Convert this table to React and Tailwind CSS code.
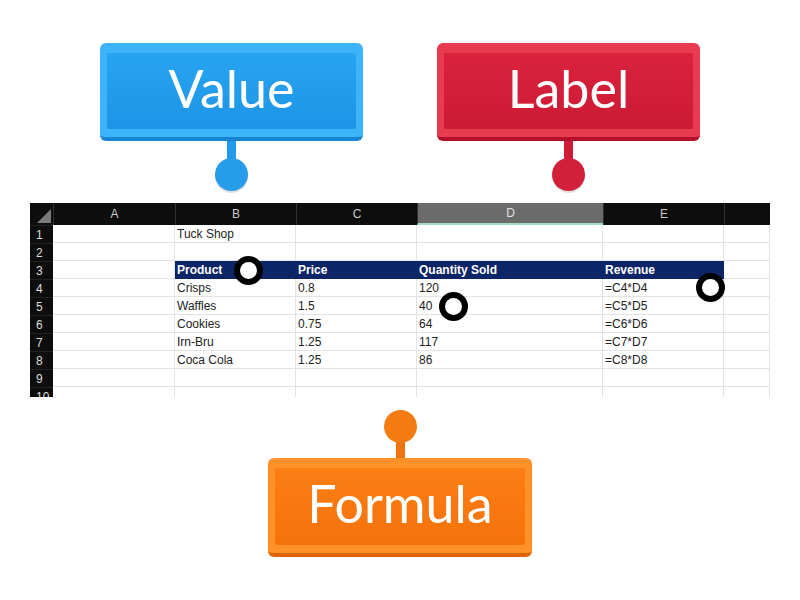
import React from 'react'

const cols = ['A', 'B', 'C', 'D', 'E', '']
const colW = ['w-[122px]', 'w-[121px]', 'w-[121px]', 'w-[186px]', 'w-[121px]', 'w-[46px]']

// rows 1..10, cells for A..(extra)
const rows = [
  ['', 'Tuck Shop', '', '', '', ''],
  ['', '', '', '', '', ''],
  ['', 'Product', 'Price', 'Quantity Sold', 'Revenue', ''],
  ['', 'Crisps', '0.8', '120', '=C4*D4', ''],
  ['', 'Waffles', '1.5', '40', '=C5*D5', ''],
  ['', 'Cookies', '0.75', '64', '=C6*D6', ''],
  ['', 'Irn-Bru', '1.25', '117', '=C7*D7', ''],
  ['', 'Coca Cola', '1.25', '86', '=C8*D8', ''],
  ['', '', '', '', '', ''],
  ['', '', '', '', '', ''],
]

function Ring({ className }) {
  return (
    <div
      className={
        'absolute h-[29px] w-[29px] rounded-full border-[6px] border-black bg-white ' +
        className
      }
    />
  )
}

function Sheet() {
  return (
    <div className="relative h-[194px] w-[740px] overflow-hidden bg-white font-['Liberation_Sans',Arial,sans-serif] text-[12px]">
      {/* column header */}
      <div className="flex h-[22px] bg-[#0d0d0d] text-[#c8c8c8]">
        <div className="relative w-[23px] shrink-0">
          <svg width="23" height="22" viewBox="0 0 23 22" className="absolute inset-0">
            <polygon points="7,20 21,20 21,6" fill="#7a7a7a" />
          </svg>
        </div>
        {cols.map((c, i) => (
          <div
            key={i}
            className={
              colW[i] +
              ' flex shrink-0 items-center justify-center border-l border-[#2e2e2e] ' +
              (c === 'D' ? 'bg-[#6b6b6b] border-b-2 border-b-[#a6dcc0] text-[#e0e0e0]' : '')
            }
          >
            {c}
          </div>
        ))}
      </div>
      {rows.map((r, ri) => (
        <div key={ri} className="flex h-[18px]">
          <div className="flex w-[23px] shrink-0 items-center border-t border-[#222] bg-[#0d0d0d] pl-[6px] text-[#dcdcdc]">
            {ri + 1}
          </div>
          {r.map((v, ci) => {
            const head = ri === 2 && ci >= 1 && ci <= 4
            return (
              <div
                key={ci}
                className={
                  colW[ci] +
                  ' flex shrink-0 items-center whitespace-nowrap pl-[2px] ' +
                  (head
                    ? 'bg-[#0b2566] font-bold text-white'
                    : 'border-b border-r border-[#e3e3e3] text-[#222]')
                }
              >
                {v}
              </div>
            )
          })}
        </div>
      ))}
    </div>
  )
}

export default function App() {
  return (
    <div className="relative h-[600px] w-[800px] overflow-hidden bg-white">
      <div className="pl-[30px] pt-[203px]">
        <Sheet />
      </div>

      {/* answer slots on the sheet */}
      <Ring className="left-[234px] top-[256px]" />
      <Ring className="left-[439px] top-[292px]" />
      <Ring className="left-[696px] top-[273px]" />

      {/* Value tag */}
      <div className="absolute left-[100px] top-[43px] flex flex-col items-center">
        <div className="flex h-[98px] w-[263px] flex-col rounded-[6px] border-b-[4px] border-[#1884d4] bg-[#3db3fa] px-[7px] pb-[8px] pt-[10px]">
          <div className="flex flex-1 items-center justify-center rounded-[2px] bg-gradient-to-b from-[#27a4f1] to-[#1d94e6] pb-[7px] font-['Lato',sans-serif] text-[52px] leading-none text-white">
            Value
          </div>
        </div>
        <div className="-mb-[3px] h-[20px] w-[9px] bg-[#2299ea]" />
        <div className="h-[33px] w-[33px] rounded-full bg-[#279ceb] shadow-[0_2px_0_rgba(0,0,0,0.12)]" />
      </div>

      {/* Label tag */}
      <div className="absolute left-[437px] top-[43px] flex flex-col items-center">
        <div className="flex h-[98px] w-[263px] flex-col rounded-[6px] border-b-[4px] border-[#b5102b] bg-[#e83a51] px-[7px] pb-[8px] pt-[10px]">
          <div className="flex flex-1 items-center justify-center rounded-[2px] bg-gradient-to-b from-[#da223d] to-[#cc1a34] pb-[7px] font-['Lato',sans-serif] text-[52px] leading-none text-white">
            Label
          </div>
        </div>
        <div className="-mb-[3px] h-[20px] w-[9px] bg-[#cf1d37]" />
        <div className="h-[33px] w-[33px] rounded-full bg-[#d21f3a] shadow-[0_2px_0_rgba(0,0,0,0.12)]" />
      </div>

      {/* Formula tag */}
      <div className="absolute left-[268px] top-[410px] flex flex-col items-center">
        <div className="h-[33px] w-[33px] rounded-full bg-[#f57c12]" />
        <div className="-mt-[1px] h-[16px] w-[9px] bg-[#ef7410]" />
        <div className="flex h-[99px] w-[264px] flex-col rounded-[6px] border-b-[4px] border-[#e06200] bg-[#ff9128] px-[7px] pb-[8px] pt-[10px]">
          <div className="flex flex-1 items-center justify-center rounded-[2px] bg-gradient-to-b from-[#fc7e14] to-[#f5720a] pb-[8px] font-['Lato',sans-serif] text-[52px] leading-none text-white">
            Formula
          </div>
        </div>
      </div>
    </div>
  )
}
